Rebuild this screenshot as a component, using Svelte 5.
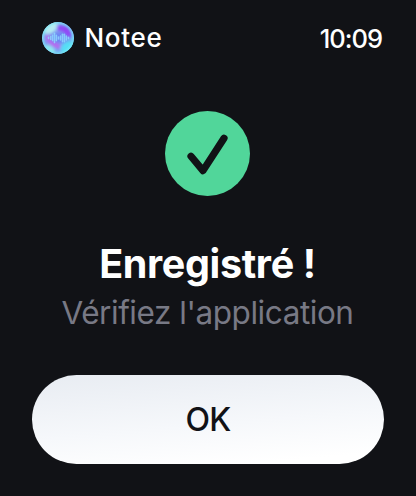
<script lang="ts">
  let appName = "Notee";
  let time = "10:09";

  // waveform bars inside the logo: [x, half height]
  const bars = [
    [6.5, 0.6], [8.7, 1.4], [10.6, 2.6], [12.5, 4.6], [14.4, 2.6],
    [16.5, 1], [18.6, 2], [20.5, 3.8], [22.4, 3.8], [24.3, 2], [26.4, 0.6],
  ];
</script>

<main class="screen">
  <header class="status">
    <div class="brand">
      <svg class="logo" viewBox="0 0 32 32">
        <defs>
          <linearGradient id="orb" x1="0" y1="0" x2="1" y2="1">
            <stop offset="0" stop-color="#86dcf0" />
            <stop offset="0.5" stop-color="#7f8cf2" />
            <stop offset="1" stop-color="#62dcf2" />
          </linearGradient>
          <radialGradient id="rim">
            <stop offset="0.8" stop-color="#7df0f5" stop-opacity="0" />
            <stop offset="1" stop-color="#7df0f5" stop-opacity="0.7" />
          </radialGradient>
          <filter id="soft" x="-50%" y="-50%" width="200%" height="200%">
            <feGaussianBlur stdDeviation="1.8" />
          </filter>
          <clipPath id="disc"><circle cx="16" cy="16" r="16" /></clipPath>
        </defs>
        <g clip-path="url(#disc)">
          <rect width="32" height="32" fill="url(#orb)" />
          <g filter="url(#soft)">
            <ellipse cx="9" cy="6" rx="8" ry="4.5" fill="#b5ecf2" transform="rotate(-35 9 6)" />
            <path d="M15 6 Q26 5 27 15" fill="none" stroke="#9345f7" stroke-width="5" />
            <path d="M5 13 Q7 22 18 25" fill="none" stroke="#b66cf0" stroke-width="5" />
            <ellipse cx="17" cy="16" rx="9" ry="5" fill="#6c86f2" />
            <ellipse cx="8" cy="27" rx="6" ry="3" fill="#8ee9ee" transform="rotate(35 8 27)" />
            <ellipse cx="25" cy="25" rx="7" ry="4.5" fill="#55def5" transform="rotate(-40 25 25)" />
          </g>
          <circle cx="16" cy="16" r="16" fill="url(#rim)" />
          {#each bars as [x, h]}
            <line x1={x} x2={x} y1={16 - h} y2={16 + h} />
          {/each}
        </g>
      </svg>
      <span class="name">{appName}</span>
    </div>
    <span class="time">{time}</span>
  </header>

  <svg class="badge" viewBox="0 0 85 85">
    <circle cx="42.5" cy="42.5" r="42.5" fill="#51d69a" />
    <path
      d="M26 45.2 L38 59.6 L59 27.3"
      fill="none"
      stroke="#111216"
      stroke-width="7.2"
      stroke-linecap="round"
      stroke-linejoin="round"
    />
  </svg>

  <h1>Enregistré !</h1>
  <p>Vérifiez l'application</p>

  <button type="button">OK</button>
</main>

<style>
  :global(body) {
    margin: 0;
    background: #111216;
  }

  .screen {
    box-sizing: border-box;
    display: flex;
    flex-direction: column;
    align-items: center;
    width: 416px;
    height: 496px;
    padding: 21px 32px 32px;
    overflow: hidden;
    background: #111216;
    color: #fff;
    font-family: Inter, "Liberation Sans", sans-serif;
    white-space: nowrap;
  }

  .status {
    display: flex;
    align-items: center;
    justify-content: space-between;
    align-self: stretch;
    height: 33px;
    padding: 0 2px 0 10px;
  }

  .brand {
    display: flex;
    align-items: center;
    gap: 10.5px;
  }

  .logo {
    display: block;
    width: 32px;
    height: 32px;
  }

  .logo line {
    stroke: #90dcff;
    stroke-width: 1.6;
    stroke-linecap: round;
    opacity: 0.8;
  }

  .name {
    font-size: 26px;
    font-weight: 500;
    letter-spacing: 0.7px;
  }

  .time {
    padding-top: 1px;
    font-size: 25.5px;
    font-weight: 500;
    letter-spacing: -1px;
  }

  .badge {
    flex: none;
    width: 85px;
    height: 85px;
    margin-top: 57px;
    margin-right: 1px;
  }

  h1 {
    margin: 43.5px 1px 0 0;
    font-size: 39.5px;
    font-weight: 700;
    line-height: 48px;
    letter-spacing: -0.35px;
  }

  p {
    margin: 5px 1px 0 0;
    color: #787985;
    font-size: 31.5px;
    font-weight: 400;
    line-height: 40px;
    letter-spacing: -0.45px;
  }

  button {
    width: 352px;
    height: 89px;
    margin-top: auto;
    padding: 0;
    border: 0;
    border-radius: 45px;
    background: linear-gradient(175deg, #e8ecf2, #f6f8fb 55%, #fff 90%);
    color: #111216;
    font: inherit;
    font-size: 32px;
    font-weight: 500;
    letter-spacing: -0.8px;
  }
</style>
